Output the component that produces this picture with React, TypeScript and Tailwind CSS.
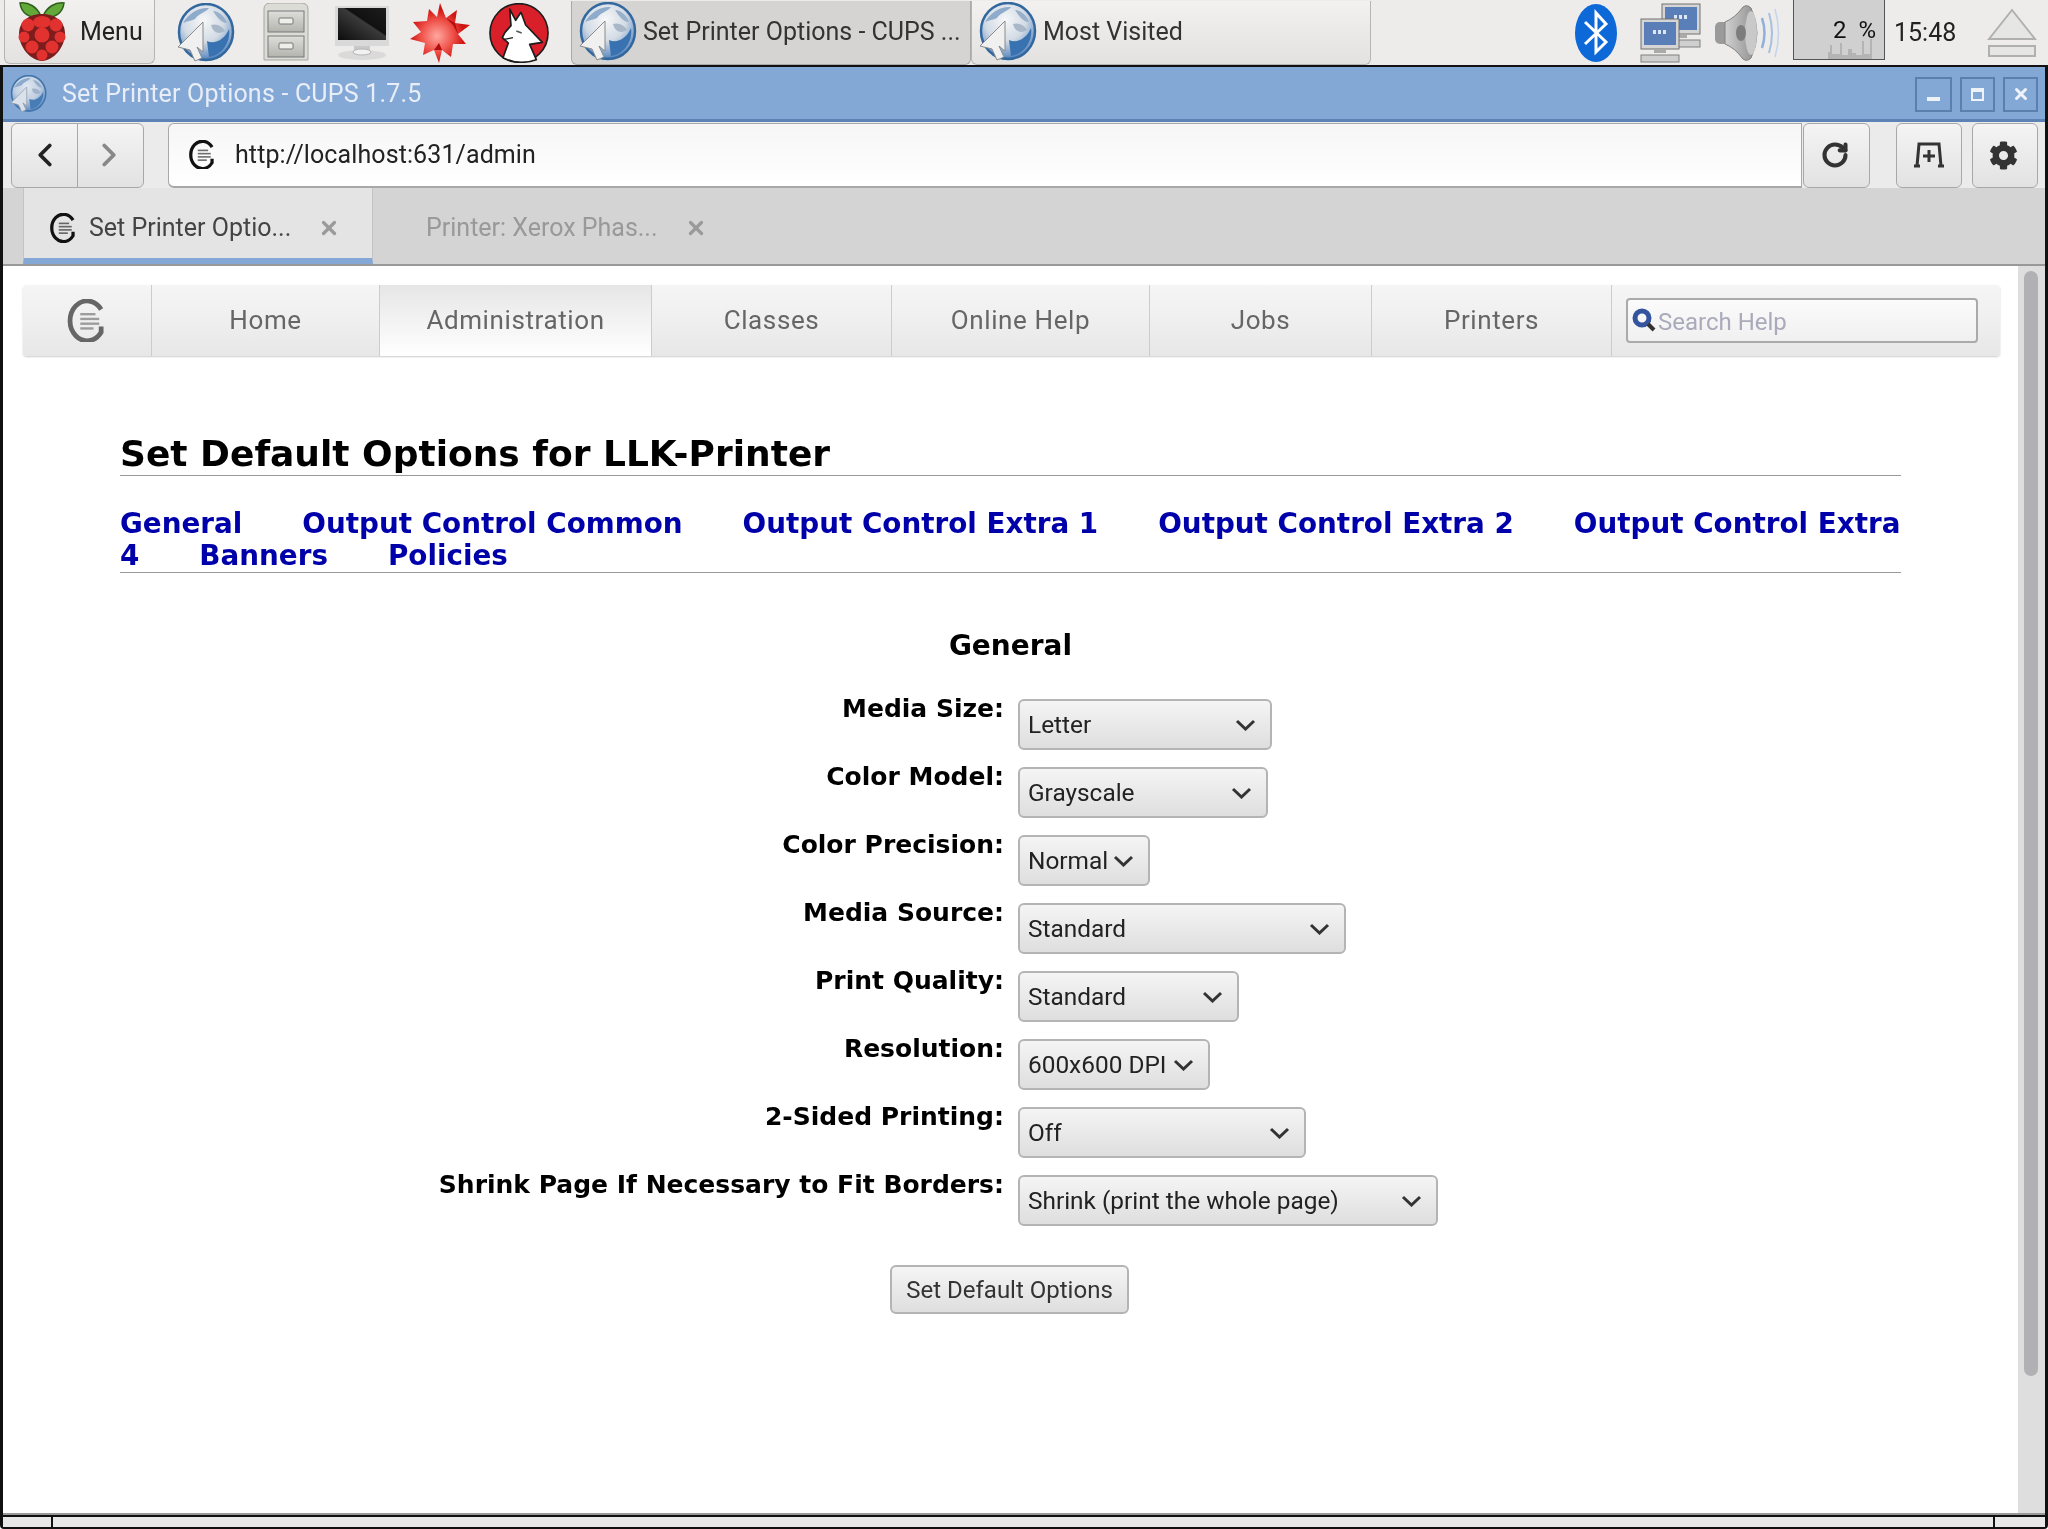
import React from 'react';
import { ChevronLeft, ChevronRight, X, RotateCw } from 'lucide-react';
import { FaCog } from 'react-icons/fa';

const Globe = ({ size = 60, id = 'gl' }: { size?: number; id?: string }) => (
  <svg width={size} height={size} viewBox="0 0 60 60">
    <defs>
      <radialGradient id={id} cx="0.45" cy="0.3" r="0.75">
        <stop offset="0" stopColor="#f6f7f8" />
        <stop offset="0.5" stopColor="#d3dbe5" />
        <stop offset="0.85" stopColor="#6f97c6" />
        <stop offset="1" stopColor="#2a64a8" />
      </radialGradient>
    </defs>
    <ellipse cx="31" cy="29" rx="27" ry="28" fill={`url(#${id})`} stroke="#33689f" strokeWidth="2.5" />
    <path d="M32 38 C40 42 50 36 54 26 C56 38 48 52 34 54Z" fill="#3872b0" />
    <path d="M8 20 C14 10 24 4 34 5 C30 10 24 10 20 16 C16 18 12 18 8 20Z" fill="#8fabcc" />
    <path d="M38 8 C44 8 50 14 52 20 C46 20 42 14 38 8Z" fill="#9ab0ca" />
    <path d="M36 22 C42 20 48 24 50 28 C44 32 38 30 36 22Z" fill="#a9b8c8" />
    <path d="M28 19 L28 49 L22 44 L27 55 L20 58 L15 47 L3 44Z" fill="#f0f0f0" stroke="#8a8a8a" strokeWidth="1" />
  </svg>
);

const Raspberry = () => (
  <svg width="50" height="62" viewBox="0 0 50 62">
    <path d="M24 15 C20 6 12 1 3 2 C4 11 12 19 24 15Z" fill="#62a93a" stroke="#2f5f1c" strokeWidth="1.5" />
    <path d="M26 15 C30 6 38 1 47 2 C46 11 38 19 26 15Z" fill="#62a93a" stroke="#2f5f1c" strokeWidth="1.5" />
    <path d="M25 13 C38 13 48 20 48 33 C48 46 36 60 25 60 C14 60 2 46 2 33 C2 20 12 13 25 13Z" fill="#7c1c1c" />
    <g fill="#e2322f">
      <ellipse cx="25" cy="21" rx="9" ry="6" />
      <circle cx="11" cy="24" r="6.5" />
      <circle cx="39" cy="24" r="6.5" />
      <circle cx="7" cy="36" r="5.5" />
      <circle cx="43" cy="36" r="5.5" />
      <circle cx="25" cy="34" r="7.5" />
      <circle cx="15" cy="46" r="6.5" />
      <circle cx="35" cy="46" r="6.5" />
      <circle cx="25" cy="54" r="5.5" />
    </g>
  </svg>
);

const Cabinet = () => (
  <svg width="46" height="60" viewBox="0 0 46 60">
    <defs>
      <linearGradient id="dr" x1="0" y1="0" x2="0" y2="1">
        <stop offset="0" stopColor="#dededa" />
        <stop offset="1" stopColor="#b3b4ae" />
      </linearGradient>
    </defs>
    <path d="M1 6 Q1 0 8 0 H38 Q45 0 45 6 V57 H1Z" fill="#dcdcd7" stroke="#a5a69f" />
    <rect x="5" y="8" width="36" height="21" fill="url(#dr)" stroke="#77787a" />
    <rect x="5" y="33" width="36" height="21" fill="url(#dr)" stroke="#77787a" />
    <rect x="16" y="15" width="14" height="6" rx="1" fill="#eeeeea" stroke="#777" />
    <rect x="16" y="40" width="14" height="6" rx="1" fill="#eeeeea" stroke="#777" />
  </svg>
);

const Monitor = () => (
  <svg width="54" height="60" viewBox="0 0 54 60">
    <defs>
      <linearGradient id="scr" x1="0" y1="1" x2="1" y2="0">
        <stop offset="0" stopColor="#0c0c0c" />
        <stop offset="0.55" stopColor="#3a3a3a" />
        <stop offset="0.58" stopColor="#111" />
        <stop offset="1" stopColor="#1d1d1d" />
      </linearGradient>
    </defs>
    <rect x="0" y="3" width="54" height="40" fill="#d9d9d9" />
    <rect x="3" y="5" width="48" height="32" fill="url(#scr)" />
    <rect x="19" y="43" width="16" height="6" fill="#c8c8c8" />
    <ellipse cx="27" cy="52" rx="24" ry="5" fill="#dadada" />
    <ellipse cx="27" cy="49" rx="9" ry="3" fill="#f2f2f2" stroke="#b5b5b5" />
  </svg>
);

const Star = () => (
  <svg width="62" height="60" viewBox="0 0 62 60">
    <defs>
      <radialGradient id="st" cx="0.45" cy="0.55" r="0.45">
        <stop offset="0" stopColor="#ffa8a0" />
        <stop offset="0.6" stopColor="#ee5048" />
        <stop offset="1" stopColor="#d01412" />
      </radialGradient>
    </defs>
    <path d="M31 0 L37 15 L48 7 L46 20 L61 22 L49 31 L57 41 L44 41 L42 54 L33 47 L30 60 L25 47 L14 52 L16 40 L1 36 L12 29 L4 19 L18 18 L20 6 L28 14Z" fill="url(#st)" />
    <path d="M37 15 L46 20 L49 31 L44 22Z M25 47 L33 47 L30 40Z" fill="#b30d0d" />
  </svg>
);

const Wolf = () => (
  <svg width="60" height="60" viewBox="0 0 180 180">
    <ellipse cx="90" cy="90" rx="87" ry="88" fill="#d9202a" stroke="#1c1c1c" strokeWidth="5" />
    <path d="M62 18 L80 52 L96 28 L110 66 L160 118 L122 124 L142 170 Q90 188 42 164 L58 120 L40 104 L48 88 L66 68Z" fill="#fff" stroke="#1c1c1c" strokeWidth="5" strokeLinejoin="round" />
    <path d="M82 84 L98 90" stroke="#555" strokeWidth="5" />
    <path d="M42 110 L72 104" stroke="#1c1c1c" strokeWidth="4" />
  </svg>
);

const Bluetooth = () => (
  <svg width="42" height="60" viewBox="0 0 42 60">
    <ellipse cx="21" cy="30" rx="21" ry="29" fill="#0d68d8" />
    <path d="M10 19 L31 39 L21 49 V10 L31 21 L10 41" fill="none" stroke="#fff" strokeWidth="3" />
  </svg>
);

const Pc = ({ x, y }: { x: number; y: number }) => (
  <g transform={`translate(${x} ${y})`}>
    <rect x="0" y="0" width="38" height="30" fill="#d5d5d5" stroke="#707070" />
    <rect x="3" y="3" width="32" height="23" fill="#5a7fb8" />
    <g fill="#dce6f5">
      <rect x="12" y="11" width="3" height="4" />
      <rect x="17" y="11" width="3" height="4" />
      <rect x="22" y="11" width="3" height="4" />
    </g>
    <rect x="13" y="30" width="12" height="4" fill="#aaa" />
    <rect x="0" y="36" width="38" height="7" fill="#cfcfcf" stroke="#808080" />
  </g>
);

const Network = () => (
  <svg width="62" height="60" viewBox="0 0 62 60">
    <Pc x={22} y={1} />
    <Pc x={1} y={16} />
  </svg>
);

const Speaker = () => (
  <svg width="66" height="58" viewBox="0 0 66 58">
    <defs>
      <linearGradient id="sp" x1="0" y1="0" x2="1" y2="0">
        <stop offset="0" stopColor="#d0d0d0" />
        <stop offset="1" stopColor="#8c8c8c" />
      </linearGradient>
    </defs>
    <rect x="0" y="18" width="14" height="22" rx="5" fill="#9a9a9a" />
    <path d="M10 18 Q20 14 28 3 Q32 0 36 4 Q48 29 36 54 Q32 58 28 55 Q20 44 10 40Z" fill="url(#sp)" stroke="#808080" />
    <ellipse cx="36" cy="29" rx="6" ry="22" fill="#c9c9c9" />
    <ellipse cx="26" cy="29" rx="5" ry="8" fill="#7d7d7d" />
    <path d="M47 14 Q52 29 47 44" fill="none" stroke="#8fb0da" strokeWidth="2.5" />
    <path d="M54 9 Q60 29 54 49" fill="none" stroke="#a5c0e2" strokeWidth="2" />
    <path d="M60 5 Q67 29 60 53" fill="none" stroke="#c2d5ec" strokeWidth="1.5" />
  </svg>
);

const CpuGraph = () => (
  <svg className="absolute bottom-0 left-0" width="90" height="22" viewBox="0 0 90 22">
    <path d="M34 22 V15 H36 V8 H38 V17 H46 V6 H48 V18 H54 V12 H58 V16 H62 V18 H68 V4 H70 V17 H76 V2 H78 V22Z" fill="#b4b4b4" />
  </svg>
);

const Eject = () => (
  <svg width="50" height="50" viewBox="0 0 50 50">
    <path d="M25 2 L48 31 H2Z" fill="#e6e6e4" stroke="#b0b0ae" strokeWidth="2" />
    <rect x="2" y="38" width="46" height="10" fill="#e6e6e4" stroke="#b0b0ae" strokeWidth="2" />
  </svg>
);

const CupsLogo = ({ size = 26, color = '#111' }: { size?: number; color?: string }) => (
  <svg width={size} height={size * 1.15} viewBox="0 0 40 46">
    <path d="M37 11 A18 21 0 1 0 37 35 V29" fill="none" stroke={color} strokeWidth="5" />
    <g stroke={color} strokeWidth="2.5" opacity="0.6">
      <path d="M15 16 H31" />
      <path d="M15 21 H35" />
      <path d="M15 26 H35" />
      <path d="M15 31 H29" />
    </g>
  </svg>
);

const SelectArrow = () => (
  <svg className="shrink-0" width="21" height="12" viewBox="0 0 21 12" fill="none" stroke="#333" strokeWidth="3">
    <path d="M2 2 L10.5 10 L19 2" />
  </svg>
);

const ToolButton = ({ className, children }: { className: string; children: React.ReactNode }) => (
  <button className={`h-[65px] flex items-center justify-center rounded-md border border-[#a8a8a8] bg-gradient-to-b from-[#f4f4f4] to-[#e2e2e2] ${className}`}>
    {children}
  </button>
);

const navItems = [
  { label: 'Home', w: 'w-[228px]' },
  { label: 'Administration', w: 'w-[272px]', active: true },
  { label: 'Classes', w: 'w-[240px]' },
  { label: 'Online Help', w: 'w-[258px]' },
  { label: 'Jobs', w: 'w-[222px]' },
  { label: 'Printers', w: 'w-[240px]' },
];

const options = [
  { label: 'Media Size:', value: 'Letter', w: 'w-[254px]' },
  { label: 'Color Model:', value: 'Grayscale', w: 'w-[250px]' },
  { label: 'Color Precision:', value: 'Normal', w: 'w-[132px]' },
  { label: 'Media Source:', value: 'Standard', w: 'w-[328px]' },
  { label: 'Print Quality:', value: 'Standard', w: 'w-[221px]' },
  { label: 'Resolution:', value: '600x600 DPI', w: 'w-[192px]' },
  { label: '2-Sided Printing:', value: 'Off', w: 'w-[288px]' },
  { label: 'Shrink Page If Necessary to Fit Borders:', value: 'Shrink (print the whole page)', w: 'w-[420px]' },
];

const links = ['General', 'Output Control Common', 'Output Control Extra 1', 'Output Control Extra 2', 'Output Control Extra', '4', 'Banners', 'Policies'];

export default function App() {
  return (
    <div className="w-[2048px] h-[1529px] overflow-hidden flex flex-col bg-white font-['Roboto',sans-serif] blur-[0.5px]">
      {/* lxpanel */}
      <div className="h-[65px] shrink-0 flex items-center bg-[#edecea] text-[#222]">
        <div className="ml-[4px] w-[151px] h-[64px] -mt-px flex items-center gap-[13px] pl-[12px] border border-t-0 border-[#b5b5b5] rounded-b-md bg-gradient-to-b from-[#f2f1ef] to-[#e3e2e0]">
          <Raspberry />
          <span className="text-[25px]">Menu</span>
        </div>
        <div className="ml-[20px] flex items-center">
          <Globe id="gl1" />
          <div className="ml-[28px]"><Cabinet /></div>
          <div className="ml-[26px]"><Monitor /></div>
          <div className="ml-[20px]"><Star /></div>
          <div className="ml-[18px]"><Wolf /></div>
        </div>
        <div className="ml-[22px] w-[400px] h-[64px] flex items-center gap-[6px] pl-[5px] border border-t-0 border-[#a9a9a9] rounded-b-md bg-[#d5d4d2]">
          <Globe id="gl2" />
          <span className="text-[25px] text-[#333] whitespace-nowrap">Set Printer Options - CUPS ...</span>
        </div>
        <div className="w-[400px] h-[64px] flex items-center gap-[6px] pl-[5px] border border-t-0 border-[#b5b5b5] rounded-b-md bg-gradient-to-b from-[#f2f1ef] to-[#e3e2e0]">
          <Globe id="gl3" />
          <span className="text-[25px] text-[#333]">Most Visited</span>
        </div>
        <div className="ml-[204px]"><Bluetooth /></div>
        <div className="ml-[23px]"><Network /></div>
        <div className="ml-[13px]"><Speaker /></div>
        <div className="relative ml-[12px] w-[92px] h-[60px] -mt-[5px] bg-[#d0d0d0] border-x border-b border-[#555] flex items-center justify-end pr-[8px]">
          <CpuGraph />
          <span className="text-[24px] text-[#111] whitespace-pre">2  %</span>
        </div>
        <span className="ml-[9px] text-[25px]">15:48</span>
        <div className="ml-[31px]"><Eject /></div>
      </div>

      {/* window */}
      <div className="h-[1464px] shrink-0 flex flex-col border-t-2 border-x-[3px] border-b-2 border-[#111] rounded-b-sm">
        <div className="h-[55px] shrink-0 flex items-center pt-[2px] bg-[#84a8d6] border-b-[3px] border-[#5c82b6]">
          <div className="ml-[6px] opacity-80"><Globe size={38} id="gl4" /></div>
          <span className="ml-[15px] text-[25px] tracking-[0.2px] text-[#e8eef7]">Set Printer Options - CUPS 1.7.5</span>
          <div className="ml-auto mr-[7px] flex gap-[8px]">
            <div className="w-[37px] h-[35px] border-2 border-[#5b80b0] flex items-end justify-center pb-[9px]">
              <div className="w-[13px] h-[4px] bg-[#eef3fa]" />
            </div>
            <div className="w-[35px] h-[35px] border-2 border-[#5b80b0] flex items-center justify-center">
              <div className="w-[13px] h-[13px] border-2 border-t-4 border-[#eef3fa]" />
            </div>
            <div className="w-[35px] h-[35px] border-2 border-[#5b80b0] flex items-center justify-center">
              <X size={18} strokeWidth={4} className="text-[#eef3fa]" />
            </div>
          </div>
        </div>

        {/* toolbar */}
        <div className="h-[66px] shrink-0 flex items-center bg-[#ebebeb] pl-[8px]">
          <div className="flex w-[133px] h-[65px] rounded-md border border-[#a8a8a8] bg-gradient-to-b from-[#f4f4f4] to-[#e2e2e2]">
            <div className="w-[66px] flex items-center justify-center border-r border-[#a8a8a8]">
              <ChevronLeft size={38} strokeWidth={2.4} className="text-[#222]" />
            </div>
            <div className="flex-1 flex items-center justify-center pr-[3px]">
              <ChevronRight size={38} strokeWidth={2.4} className="text-[#888]" />
            </div>
          </div>
          <div className="ml-[24px] w-[1634px] h-[65px] flex items-center pl-[19px] rounded-l-md border border-[#a8a8a8] border-b-2 bg-gradient-to-b from-[#f6f6f6] to-white">
            <CupsLogo />
            <span className="ml-[21px] text-[25px] tracking-[0.1px] text-[#222]">http://localhost:631/admin</span>
          </div>
          <ToolButton className="w-[67px] ml-[1px] pr-[4px]"><RotateCw size={28} strokeWidth={3.5} className="text-[#333]" /></ToolButton>
          <ToolButton className="w-[66px] ml-[26px]">
            <svg width="32" height="26" viewBox="0 0 32 26" fill="none" stroke="#333" strokeWidth="3">
              <path d="M4 24 L6 2 H26 L28 24" />
              <path d="M1 24 H7 M25 24 H31" />
              <path d="M16 8 V20 M10 14 H22" />
            </svg>
          </ToolButton>
          <ToolButton className="w-[66px] ml-[10px] pr-[3px]"><FaCog size={29} className="text-[#333]" /></ToolButton>
        </div>

        {/* tabs */}
        <div className="h-[78px] shrink-0 flex bg-[#d4d4d4] border-b-2 border-[#999] pl-[20px]">
          <div className="w-[350px] h-[76px] flex items-center bg-[#e4e4e4] border-b-[6px] border-[#84a8d6] border-x border-x-[#c4c4c4] pl-[25px] pt-[10px] text-[#444]">
            <CupsLogo />
            <span className="ml-[14px] w-[198px] text-[25px] whitespace-nowrap">Set Printer Optio...</span>
            <X size={22} strokeWidth={3.5} className="ml-[31px] text-[#9a9a9a]" />
          </div>
          <div className="w-[360px] flex items-center pl-[53px] pt-[4px] text-[#999]">
            <span className="w-[230px] text-[25px] whitespace-nowrap">Printer: Xerox Phas...</span>
            <X size={22} strokeWidth={3.5} className="ml-[29px] text-[#9a9a9a]" />
          </div>
        </div>

        {/* page */}
        <div className="flex-1 min-h-0 overflow-hidden flex border-b-2 border-[#999]">
          <div className="flex-1 pt-[19px] pl-[20px]">
            <div className="w-[1977px] h-[71px] flex rounded-sm bg-gradient-to-b from-[#f5f5f5] via-[#efefef] to-[#e7e7e7] shadow-[0_1px_2px_#ccc] text-[26px] text-[#666]">
              <div className="w-[128px] flex items-center justify-center pr-[5px]">
                <CupsLogo size={38} color="#666" />
              </div>
              {navItems.map((item) => (
                <div
                  key={item.label}
                  className={`${item.w} flex items-center justify-center border-l border-[#ccc] tracking-[0.6px] ${
                    item.active ? 'bg-gradient-to-b from-[#e6e6e6] to-white' : ''
                  }`}
                >
                  {item.label}
                </div>
              ))}
              <div className="flex-1 flex items-center border-l border-[#ccc] pl-[14px]">
                <div className="w-[352px] h-[45px] flex items-center gap-[1px] pl-[4px] rounded border-2 border-[#aaa] bg-gradient-to-b from-[#fbfbfb] to-[#f0f0f0]">
                  <svg width="25" height="25" viewBox="0 0 25 25" fill="none">
                    <circle cx="10" cy="10" r="7" stroke="#34549e" strokeWidth="5" />
                    <path d="M16 16 L22 22" stroke="#333" strokeWidth="4" />
                  </svg>
                  <span className="text-[24px] pt-[2px] text-[#aab]">Search Help</span>
                </div>
              </div>
            </div>

            <div className="ml-[97px] mt-[73px] w-[1781px] text-[#000] font-['DejaVu_Sans',sans-serif]">
              <h2 className="text-[36px] font-bold leading-[42px] pt-[4px] border-b border-[#999]">
                Set Default Options for LLK-Printer
              </h2>
              <div className="mt-[32px] flex flex-wrap gap-x-[60px] border-b border-[#999] text-[27.8px] leading-[32px] font-bold text-[#0000aa] whitespace-nowrap">
                {links.map((l) => (
                  <span key={l}>{l}</span>
                ))}
              </div>

              <h3 className="mt-[57px] text-center text-[28px] font-bold leading-[32px]">General</h3>

              <div className="mt-[37px] flex flex-col gap-[17px]">
                {options.map((o) => (
                  <div key={o.label} className="flex h-[51px]">
                    <div className="w-[884px] text-right text-[25px] font-bold leading-[20px]">{o.label}</div>
                    <div className={`ml-[14px] ${o.w} h-[51px] flex items-center justify-between pl-[8px] pr-[14px] pt-[1px] rounded-[6px] border-2 border-[#b4b4b4] bg-gradient-to-b from-[#f5f5f5] to-[#dedede] font-['Roboto',sans-serif] text-[24.4px] text-[#222]`}>
                      <span className="whitespace-nowrap">{o.value}</span>
                      <SelectArrow />
                    </div>
                  </div>
                ))}
              </div>

              <div className="mt-[39px] ml-[770px]">
                <button className="w-[239px] h-[49px] rounded-[6px] border-2 border-[#b4b4b4] bg-gradient-to-b from-[#f5f5f5] to-[#dedede] font-['Roboto',sans-serif] text-[24px] text-[#333]">
                  Set Default Options
                </button>
              </div>
            </div>
          </div>

          {/* scrollbar */}
          <div className="w-[27px] shrink-0 bg-[#dedede] pt-[5px] pl-[6px]">
            <div className="w-[14px] h-[1105px] rounded-full bg-[#b1b1b3]" />
          </div>
        </div>

        {/* status bar */}
        <div className="h-[12px] shrink-0 flex border-t-2 border-[#111] bg-[#e8e8e8]">
          <div className="w-[50px] border-r-2 border-[#111]" />
          <div className="flex-1 border-r-2 border-[#111]" />
          <div className="w-[50px]" />
        </div>
      </div>
    </div>
  );
}
